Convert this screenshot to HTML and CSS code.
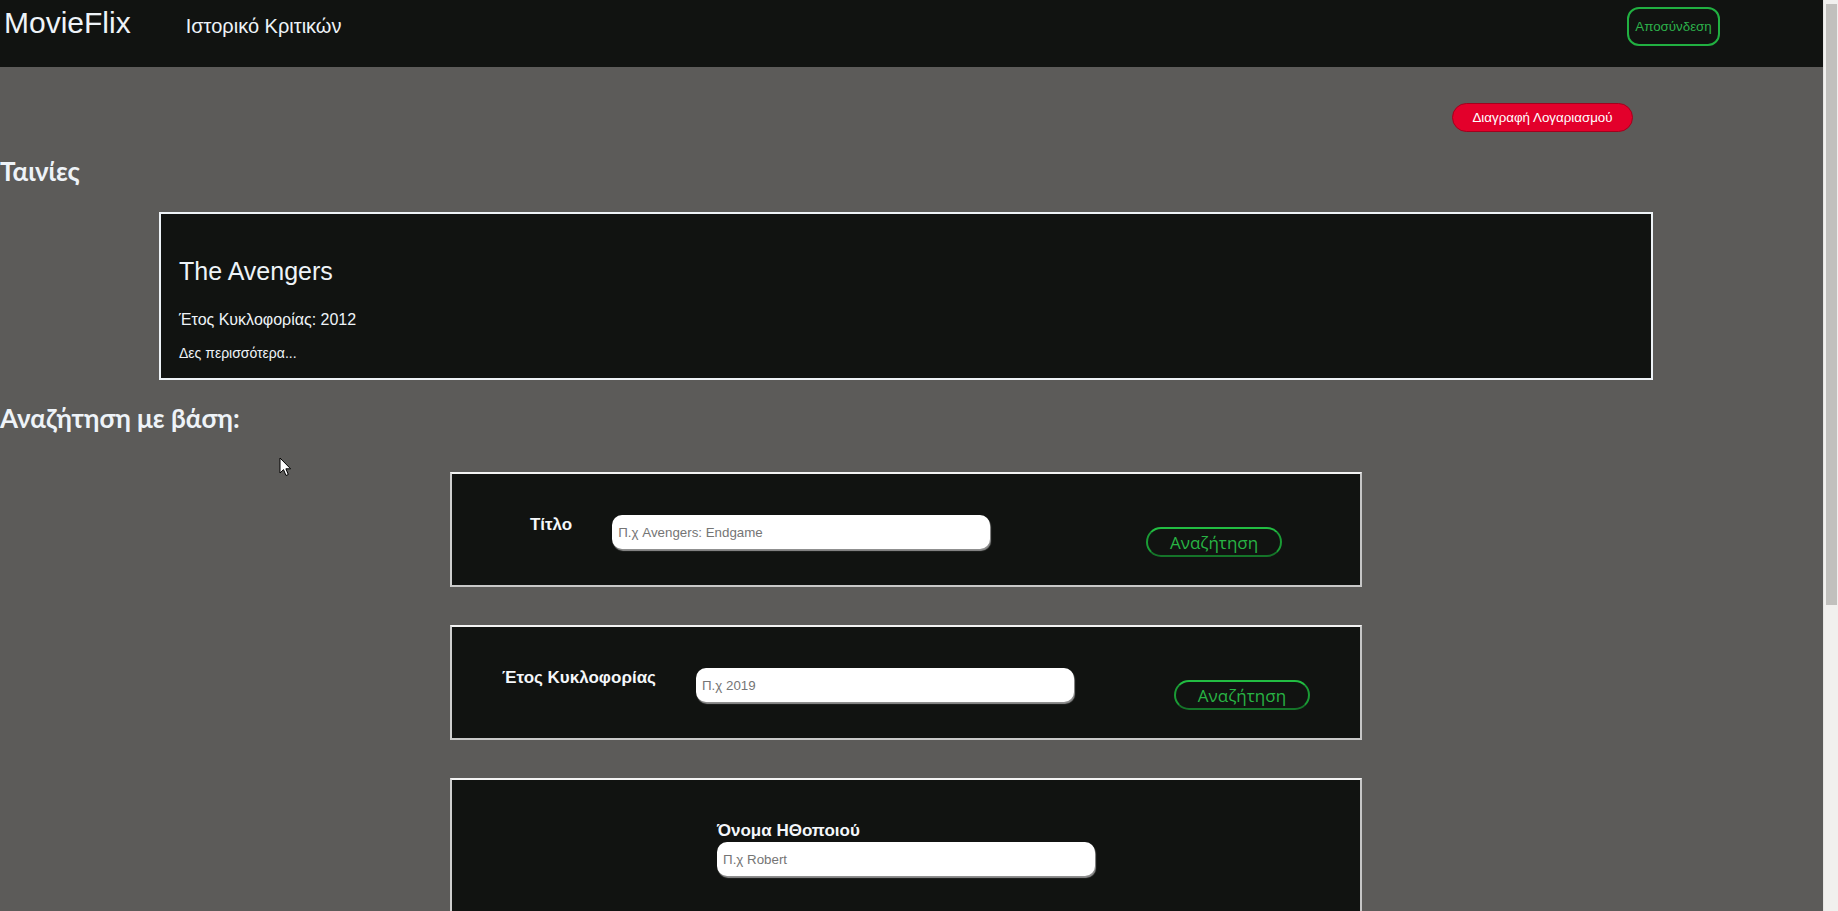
FILE: index.html
```html
<!DOCTYPE html>
<html lang="el">
<head>
<meta charset="utf-8">
<title>MovieFlix</title>
<link rel="stylesheet" href="styles.css">
</head>
<body>
<header class="navbar">
  <a class="brand" href="#">MovieFlix</a>
  <a class="nav-link" href="#">Ιστορικό Κριτικών</a>
  <button class="btn-logout" type="button">Αποσύνδεση</button>
</header>
<main class="content">
  <div class="account-row">
    <button class="btn-delete" type="button">Διαγραφή Λογαριασμού</button>
  </div>
  <h2 class="section-title">Ταινίες</h2>
  <div class="movie-card">
    <h3 class="movie-title">The Avengers</h3>
    <p class="movie-year">Έτος Κυκλοφορίας: 2012</p>
    <p class="movie-more"><a href="#">Δες περισσότερα...</a></p>
  </div>
  <h2 class="section-title search-title">Αναζήτηση με βάση:</h2>
  <form class="search-box">
    <div class="field-row">
      <label class="field-label">Τίτλο</label>
      <input class="field-input" type="text" placeholder="Π.χ Avengers: Endgame">
    </div>
    <button class="btn-search" type="button">Αναζήτηση</button>
  </form>
  <form class="search-box">
    <div class="field-row">
      <label class="field-label">Έτος Κυκλοφορίας</label>
      <input class="field-input" type="text" placeholder="Π.χ 2019">
    </div>
    <button class="btn-search" type="button">Αναζήτηση</button>
  </form>
  <form class="search-box actor-box">
    <div class="field-col">
      <label class="field-label">Όνομα ΗΘοποιού</label>
      <input class="field-input" type="text" placeholder="Π.χ Robert">
    </div>
  </form>
</main>
<div class="scrollbar" aria-hidden="true"><div class="scrollbar-thumb"></div></div>
<svg class="cursor" width="13" height="20" viewBox="0 0 13 20" aria-hidden="true">
  <path d="M1 1 L1 16 L4.5 12.6 L7 18.5 L9.3 17.5 L6.9 11.8 L11.6 11.8 Z" fill="#ffffff" stroke="#000000" stroke-width="1" stroke-linejoin="round"/>
</svg>
</body>
</html>
```
FILE: styles.css
```css
* {
  box-sizing: border-box;
}

html,
body {
  margin: 0;
  padding: 0;
}

html {
  background: #5c5b59;
}

body {
  position: relative;
  margin-right: 15px;
  background: #5c5b59;
  color: #f0f4f8;
  font-family: "Liberation Sans", Arial, sans-serif;
}

/* ---------- navbar ---------- */
.navbar {
  display: flex;
  align-items: baseline;
  height: 67px;
  padding: 6px 103px 0 4px;
  background: #111311;
}

.brand {
  font-size: 30px;
  color: #eef3f8;
  text-decoration: none;
}

.nav-link {
  margin-left: 55px;
  font-size: 20px;
  color: #eef3f8;
  text-decoration: none;
}

.btn-logout {
  align-self: flex-start;
  margin-left: auto;
  margin-top: 1px;
  width: 93px;
  height: 39px;
  padding: 0;
  border: 2px solid #21b041;
  border-radius: 12px;
  background: transparent;
  color: #2db24b;
  font-family: "Liberation Sans", Arial, sans-serif;
  font-size: 13.33px;
}

/* ---------- content ---------- */
.content {
  padding: 0 11px 40px 0;
}

.account-row {
  display: flex;
  justify-content: flex-end;
  margin-top: 36px;
  padding-right: 179px;
}

.btn-delete {
  width: 181px;
  height: 29px;
  padding: 0;
  border: 1px solid #a3001d;
  border-radius: 15px;
  background: #e3002b;
  color: #ffffff;
  font-family: "Liberation Sans", Arial, sans-serif;
  font-size: 13.33px;
}

.section-title {
  margin: 24px 0 0;
  font-family: "Lato", "Open Sans", sans-serif;
  font-size: 26px;
  font-weight: 700;
  line-height: 1.2;
  color: #eef3f8;
}

.search-title {
  margin-top: 23.5px;
}

.movie-card {
  width: 1494px;
  margin: 25px auto 0;
  padding: 43px 18px 17px;
  border: 2px solid #eef3f7;
  background: #111311;
}

.movie-title {
  margin: 0;
  font-size: 25px;
  font-weight: 400;
  color: #eef3f8;
}

.movie-year {
  margin: 24.5px 0 0;
  font-size: 16px;
  color: #eef3f8;
}

.movie-more {
  margin: 16px 0 0;
  font-size: 14px;
}

.movie-more a {
  color: #eef3f8;
  text-decoration: none;
}

/* ---------- search boxes ---------- */
.search-box {
  display: flex;
  justify-content: space-around;
  align-items: flex-start;
  width: 912px;
  height: 115px;
  margin: 38px auto 0;
  padding: 41px 0 0;
  border: 2px solid;
  border-color: #f3f3f3 #c6c6c6 #c9c9c9 #cfcfcf;
  background: #111311;
}

.search-title + .search-box {
  margin-top: 38px;
}

.actor-box {
  height: auto;
  padding-bottom: 70px;
}

.field-row {
  display: flex;
  align-items: flex-start;
  gap: 40px;
}

.field-col {
  display: flex;
  flex-direction: column;
  align-items: flex-start;
  width: 378px;
}

.field-label {
  font-size: 17px;
  font-weight: 700;
  color: #f4f7fa;
}

.field-col .field-input {
  margin-top: 1px;
}

.field-input {
  width: 378px;
  height: 34px;
  padding: 0 6px;
  border: none;
  border-radius: 10px;
  background: #ffffff;
  box-shadow: 1px 2px 1px #8f8f8f;
  color: #222222;
  font-family: "Liberation Sans", Arial, sans-serif;
  font-size: 13.33px;
  outline: none;
}

.field-input::placeholder {
  color: #757575;
}

.btn-search {
  margin-top: 12px;
  width: 136px;
  height: 30px;
  padding: 0;
  border: 2px solid;
  border-color: #22bd42 #1a9b35 #157429 #1a9b35;
  border-radius: 15px;
  background: transparent;
  color: #28b444;
  font-family: "Open Sans", "Noto Sans", sans-serif;
  font-size: 17px;
  line-height: 1;
}

/* ---------- browser scrollbar and mouse pointer (overlays) ---------- */
.scrollbar {
  position: fixed;
  top: 0;
  right: 0;
  width: 15px;
  height: 100vh;
  background: #f1f0ee;
  border-left: 1px solid #e6e5e3;
}

.scrollbar-thumb {
  width: 11px;
  height: 601px;
  margin: 4px 0 0 2px;
  background: #c1c0bd;
}

.cursor {
  position: absolute;
  left: 279px;
  top: 457px;
}
```
